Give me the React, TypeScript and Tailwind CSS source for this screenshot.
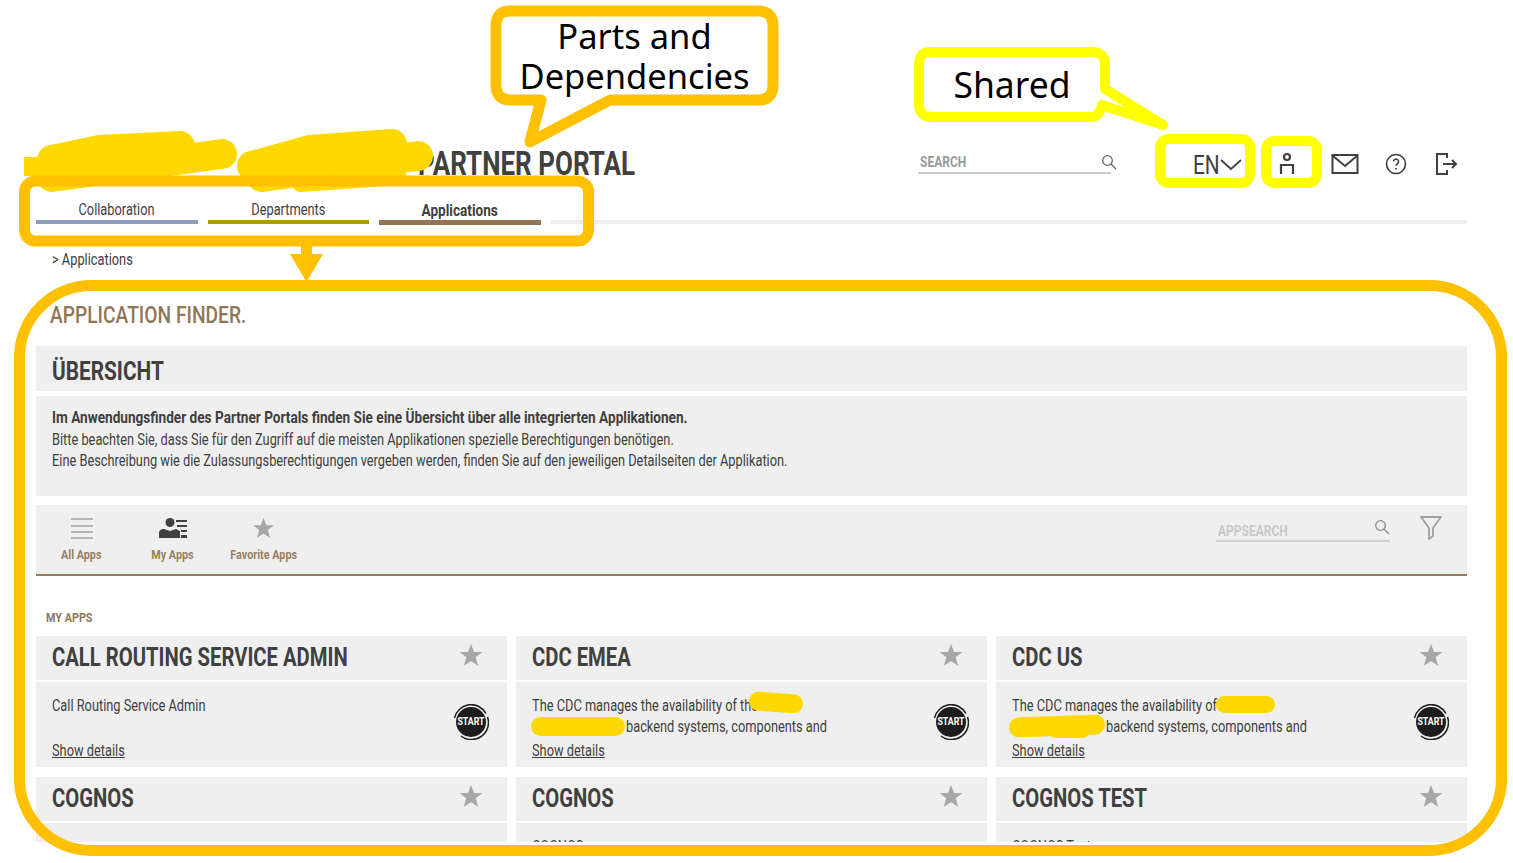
const cond = { fontFamily: '"Roboto", "Liberation Sans", sans-serif' };

const Narrow = ({ children, center = false, className = '' }: { children: React.ReactNode; center?: boolean; className?: string }) => (
  <span className={`inline-block whitespace-nowrap scale-x-[0.8] ${center ? 'origin-center' : 'origin-left'} ${className}`}>{children}</span>
);

const Star = ({ className = 'w-6 h-6' }: { className?: string }) => (
  <svg viewBox="0 0 24 24" className={className} fill="#a6a6a6">
    <path d="M12 1l3 8h8.500l-6.800 5.300 2.500 8.700L12 18l-7.200 5 2.500-8.700L.5 9H9z" />
  </svg>
);

const SearchIcon = ({ stroke = '#666' }: { stroke?: string }) => (
  <svg viewBox="0 0 16 16" className="w-4 h-4" fill="none" stroke={stroke} strokeWidth="1.300">
    <circle cx="6.500" cy="6.500" r="4.800" />
    <path d="M10 10l5 5" />
  </svg>
);

const StartButton = () => (
  <div className="w-9 h-9 shrink-0 relative flex items-center justify-center">
    <svg viewBox="0 0 36 36" className="absolute inset-0 w-9 h-9" fill="none" stroke="#1a1a1a" strokeWidth="1.500">
      <path d="M1.500 14A17 17 0 0 1 33 9.500" />
      <path d="M34.500 13A17 17 0 0 1 8 32" />
    </svg>
    <div className="w-[30px] h-[30px] rounded-full bg-[#1c1c1c] flex items-center justify-center text-white text-[11px] font-bold">
      <Narrow center>START</Narrow>
    </div>
  </div>
);

const Blob = ({ className }: { className: string }) => (
  <span className={`absolute bg-[#ffd800] rounded-full ${className}`} />
);

type App = { title: string; first: string; second?: string; blobs?: string[] };

const apps: App[] = [
  { title: 'CALL ROUTING SERVICE ADMIN', first: 'Call Routing Service Admin' },
  {
    title: 'CDC EMEA',
    first: 'The CDC manages the availability of the',
    second: 'backend systems, components and',
    blobs: ['left-[233px] top-[11px] w-[54px] h-[19px] rotate-[4deg]', 'left-[15px] top-[35px] w-[94px] h-[19px]'],
  },
  {
    title: 'CDC US',
    first: 'The CDC manages the availability of',
    second: 'backend systems, components and',
    blobs: [
      'left-[220px] top-[14px] w-[59px] h-[17px]',
      'left-[13px] top-[34px] w-[96px] h-[20px] -rotate-[2deg]',
      'left-[52px] top-[40px] w-[42px] h-[16px]',
    ],
  },
  { title: 'COGNOS', first: 'Cognos' },
  { title: 'COGNOS', first: 'COGNOS' },
  { title: 'COGNOS TEST', first: 'COGNOS Test' },
];

const Card = ({ app }: { app: App }) => (
  <div className="flex flex-col gap-[2px]">
    <div className="h-[44px] bg-[#efefef] flex items-center justify-between pl-[16px] pr-[24px]">
      <div className="text-[25.300px] font-bold text-[#404040] leading-none"><Narrow>{app.title}</Narrow></div>
      <div className="-mt-[7px]"><Star /></div>
    </div>
    <div className="h-[85px] bg-[#efefef] relative flex justify-between pl-[16px] pr-[18px]">
      <div className="flex flex-col pt-[13px] pb-[6px] text-[16px] text-[#404040] justify-between">
        <div className="leading-[21px]">
          <div><Narrow>{app.first}</Narrow></div>
          {app.second && <div className="pl-[94px]"><Narrow>{app.second}</Narrow></div>}
        </div>
        <div className="leading-[21px]"><Narrow className="underline">Show details</Narrow></div>
      </div>
      <div className="pt-[22px]"><StartButton /></div>
      {app.blobs?.map((b) => <Blob key={b} className={b} />)}
    </div>
  </div>
);

const Annotations = () => (
  <svg className="absolute inset-0 pointer-events-none" width="1513" height="863" fill="none">
    {/* redaction scribbles */}
    <path fill="#ffd800" d="M24 157H40V176H24Z" />
    <g stroke="#ffd800" strokeWidth="30" strokeLinecap="round" strokeLinejoin="round">
      <path d="M52 160L100 150L180 146M52 177L222 154" />
      <path d="M252 166L310 150L392 144M262 177L418 156" />
    </g>
    <path stroke="#ffd800" strokeWidth="14" strokeLinecap="round" d="M300 185L400 178" />
    <g stroke="#ffc000" strokeWidth="11" strokeLinejoin="round">
      {/* parts and dependencies callout */}
      <path fill="#fff" d="M510 11H758Q773 11 773 26V85Q773 100 758 100H610L530 142L541 100H511Q496 100 496 85V26Q496 11 510 11Z" />
      {/* tabs box */}
      <rect x="24.500" y="181" width="564" height="60" rx="11" />
      {/* content box */}
      <rect x="19.500" y="285.500" width="1482" height="565" rx="72" />
    </g>
    <path fill="#ffc000" d="M301 245H312V254H323L306.500 282L290 254H301Z" />
    <g stroke="#ffff00" strokeWidth="10" strokeLinejoin="round">
      <path fill="#fff" d="M930 52H1092Q1105 52 1105 65V89L1163 125L1102 105Q1100 117 1090 117H932Q919 117 919 104V65Q919 52 930 52Z" />
      <rect x="1160" y="139" width="90" height="44" rx="9" />
      <rect x="1266" y="141" width="51" height="42" rx="9" />
    </g>
  </svg>
);

export default function App() {
  return (
    <div className="relative w-[1513px] h-[863px] overflow-hidden bg-white" style={cond}>
      <div className="h-[842px] overflow-hidden px-[36px] pr-[46px]">
        <header className="h-[135px]" />
        <div className="h-[52px] flex items-center pl-[382px] text-[#404040]">
          <div className="text-[32.500px] font-bold leading-none w-[500px] mt-[6px]"><Narrow>PARTNER PORTAL</Narrow></div>
          <div className="flex items-center w-[193px] h-[24px] border-b-2 border-[#c8c8c8] pl-[2px] justify-between text-[15px] font-bold text-[#999] mt-[2px]">
            <span className="mt-[2px]"><Narrow>SEARCH</Narrow></span>
            <span className="-mr-[6px] mt-[2px]"><SearchIcon /></span>
          </div>
          <div className="ml-[82px] text-[26px] leading-none flex items-center w-[51px] mt-[8px]">
            <Narrow>EN</Narrow>
            <svg viewBox="0 0 22 12" className="w-[22px] h-[12px] -ml-[6px] shrink-0" fill="none" stroke="#404040" strokeWidth="1.800"><path d="M1 1l10 9 10-9" /></svg>
          </div>
          <div className="ml-[33px] flex items-center mt-[6px]">
            <svg viewBox="0 0 20 24" className="w-[20px] h-[24px]" fill="none" stroke="#404040" strokeWidth="2.200">
              <circle cx="10" cy="5" r="3" />
              <path d="M4 22V13H16V22" />
            </svg>
            <svg viewBox="0 0 28 22" className="ml-[34px] w-[28px] h-[22px]" fill="none" stroke="#404040" strokeWidth="2">
              <rect x="1.500" y="2" width="25" height="18" />
              <path d="M2 3l12 10L26 3" />
            </svg>
            <svg viewBox="0 0 22 22" className="ml-[26px] w-[22px] h-[22px]" fill="none" stroke="#404040" strokeWidth="1.600">
              <circle cx="11" cy="11" r="9.500" />
              <path d="M8.500 8.500a2.500 2.500 0 1 1 3.800 2.200c-.9.500-1.300 1-1.300 2M11 15v1.500" />
            </svg>
            <svg viewBox="0 0 24 24" className="ml-[28px] w-[24px] h-[24px]" fill="none" stroke="#404040" strokeWidth="2">
              <path d="M12 6V2H2V22H12V18" />
              <path d="M8 12H21M17 8l4 4-4 4" />
            </svg>
          </div>
        </div>
        <nav className="flex items-end gap-[10px] h-[37px] text-[16px] text-[#404040]">
          <div className="w-[162px] border-b-4 border-[#8e9fbc] text-center leading-[18px] pb-[1px]"><Narrow center>Collaboration</Narrow></div>
          <div className="w-[161px] border-b-4 border-[#a9a000] text-center leading-[18px] pb-[1px]"><Narrow center>Departments</Narrow></div>
          <div className="w-[162px] border-b-[5px] -mb-[1px] border-[#917656] text-center font-bold text-[17px] leading-[18px] pb-[1px]"><Narrow center>Applications</Narrow></div>
          <div className="flex-1 h-[4px] bg-[#eeeeee]" />
        </nav>
        <div className="h-[24px] mt-[24px] pl-[16px] text-[16px] text-[#404040] leading-[24px]"><Narrow>&gt; Applications</Narrow></div>
        <div className="h-[36px] mt-[25px] pl-[14px] text-[24px] font-medium text-[#917656] leading-[36px]"><Narrow>APPLICATION FINDER.</Narrow></div>
        <div className="mt-[13px] h-[45px] bg-[#efefef] flex items-center pl-[16px] pt-[6px] text-[26px] font-bold text-[#404040]"><Narrow>ÜBERSICHT</Narrow></div>
        <div className="mt-[5px] h-[100px] bg-[#efefef] pl-[16px] pt-[11px] text-[16px] leading-[21.500px] text-[#404040]">
          <div className="font-bold text-[17px]"><Narrow>Im Anwendungsfinder des Partner Portals finden Sie eine Übersicht über alle integrierten Applikationen.</Narrow></div>
          <div><Narrow>Bitte beachten Sie, dass Sie für den Zugriff auf die meisten Applikationen spezielle Berechtigungen benötigen.</Narrow></div>
          <div><Narrow>Eine Beschreibung wie die Zulassungsberechtigungen vergeben werden, finden Sie auf den jeweiligen Detailseiten der Applikation.</Narrow></div>
        </div>
        <div className="mt-[9px] h-[71px] bg-[#efefef] border-b-2 border-[#977b5b] flex justify-between text-[13.500px] font-bold text-[#9a7f5f]">
          <div className="flex">
            <div className="w-[91px] flex flex-col items-center pt-[12px]">
              <svg viewBox="0 0 24 22" className="w-[24px] h-[22px]" stroke="#b5b5b5" strokeWidth="2"><path d="M1 2H23M1 9H23M1 15H23M1 21H23" /></svg>
              <span className="mt-[5px]"><Narrow center>All Apps</Narrow></span>
            </div>
            <div className="w-[91px] flex flex-col items-center pt-[12px]">
              <svg viewBox="0 0 30 22" className="w-[30px] h-[22px]" fill="#404040">
                <circle cx="12" cy="5.500" r="4.500" />
                <path d="M1 21V16Q1 12 6 12L12 14L18 12Q20 13 22 14V21Z" />
                <path d="M18 3H29V5H18ZM19 8H29V10H19ZM23 13H29V15H23ZM23 18H29V21H23Z" />
              </svg>
              <span className="mt-[5px]"><Narrow center>My Apps</Narrow></span>
            </div>
            <div className="w-[91px] flex flex-col items-center pt-[12px]">
              <Star className="w-[23px] h-[22px]" />
              <span className="mt-[5px]"><Narrow center>Favorite Apps</Narrow></span>
            </div>
          </div>
          <div className="flex items-start pr-[24px]">
            <div className="mt-[16px] w-[174px] h-[21px] border-b-2 border-[#cfcfcf] flex justify-between pl-[2px] text-[15px] text-[#c9c9c9] leading-[20px]">
              <Narrow>APPSEARCH</Narrow>
              <span className="-mt-[2px]"><SearchIcon stroke="#8a8a8a" /></span>
            </div>
            <svg viewBox="0 0 24 26" className="ml-[29px] mt-[10px] w-[24px] h-[26px]" fill="none" stroke="#a0a0a0" strokeWidth="1.800" strokeLinejoin="round">
              <path d="M2 2H22L14 13V21L10 24V13Z" />
            </svg>
          </div>
        </div>
        <div className="h-[60px] pl-[10px] pt-[32px] text-[13.500px] font-bold text-[#917656] leading-[18px]"><Narrow>MY APPS</Narrow></div>
        <div className="grid grid-cols-3 gap-x-[9.500px] gap-y-[10px]">
          {apps.map((a, i) => <Card key={i} app={a} />)}
        </div>
      </div>
      <Annotations />
      <div className="absolute left-[496px] top-[16px] w-[277px] text-center text-[34.500px] leading-[40px] text-black" style={{ fontFamily: '"Noto Sans", sans-serif' }}>
        Parts and<br />Dependencies
      </div>
      <div className="absolute left-[924px] top-[64px] w-[176px] text-center text-[35.500px] leading-[40px] text-black" style={{ fontFamily: '"Noto Sans", sans-serif' }}>
        Shared
      </div>
    </div>
  );
}
